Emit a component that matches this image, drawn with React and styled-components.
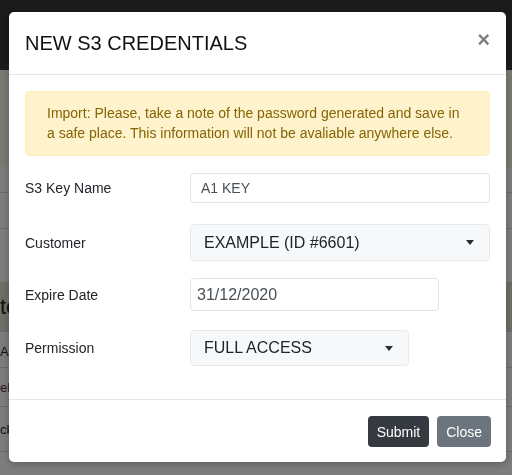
import React from "react";
import styled, { createGlobalStyle } from "styled-components";

const GlobalStyle = createGlobalStyle`
   html, body {
      margin: 0;
      padding: 0;
      height: 475px;
      overflow: hidden;
      font-family: "Liberation Sans", Arial, sans-serif;
      background: #fafafa;
   }
   * {
      box-sizing: border-box;
   }
`;

// page behind the modal
const Page = styled.div`
   display: flex;
   flex-direction: column;
   height: 475px;
   background: #fafafa;
`;

const Navbar = styled.div`
   height: 70px;
   background: #363636;
`;

const PageHead = styled.div`
   height: 97px;
   background: #f5f5e6;
`;

const TableRow = styled.div`
   display: flex;
   align-items: center;
   height: ${(p) => p.$h}px;
   border-bottom: 1px solid #d6d6d6;
   background: ${(p) => (p.$band ? "#dedece" : "#fafafa")};
   font-size: ${(p) => (p.$big ? "22px" : "13px")};
   color: ${(p) => p.$color || "#212529"};
   padding-top: ${(p) => p.$pt || 0}px;
   white-space: nowrap;
`;

// modal
const Backdrop = styled.div`
   position: fixed;
   inset: 0;
   background: rgba(0, 0, 0, 0.5);
`;

const Modal = styled.div`
   position: fixed;
   top: 12px;
   left: 9px;
   width: 497px;
   background: #fff;
   border-radius: 5px;
   box-shadow: 0 2px 8px rgba(0, 0, 0, 0.25);
   color: #212529;
`;

const Header = styled.div`
   display: flex;
   align-items: center;
   justify-content: space-between;
   height: 63px;
   padding: 0 16px;
   border-bottom: 1px solid #e5e5e5;
`;

const Title = styled.h5`
   margin: 0;
   padding-top: 1px;
   font-size: 20px;
   font-weight: 400;
   color: #111;
`;

const CloseX = styled.button`
   border: 0;
   background: none;
   padding: 0;
   margin-top: -6px;
   font-family: "Liberation Sans", Arial, sans-serif;
   font-size: 22px;
   font-weight: 700;
   line-height: 1;
   color: #000;
   opacity: 0.5;
`;

const Body = styled.div`
   padding: 16px;
`;

const Alert = styled.div`
   padding: 11px 20px 12px 21px;
   margin-bottom: 17px;
   border: 1px solid #ffeeba;
   border-radius: 4px;
   background: #fff3cd;
   color: #856404;
   font-size: 14px;
   line-height: 20px;
`;

const Row = styled.div`
   display: grid;
   grid-template-columns: 165px 1fr;
   align-items: center;
   margin-bottom: ${(p) => p.$mb || 0}px;
`;

const Label = styled.label`
   font-size: 14px;
   color: #212529;
`;

const Input = styled.div`
   display: flex;
   align-items: center;
   width: ${(p) => p.$w || "100%"};
   height: ${(p) => p.$h}px;
   padding: 0 ${(p) => p.$pl}px;
   border: 1px solid #e1e4e7;
   border-radius: 4px;
   background: #fff;
   color: #495057;
   font-size: ${(p) => p.$fs}px;
`;

const Select = styled.div`
   display: flex;
   align-items: center;
   justify-content: space-between;
   width: ${(p) => p.$w || "100%"};
   height: ${(p) => p.$h}px;
   padding: 0 15px 0 13px;
   border: 1px solid #e6e9ec;
   border-radius: 4px;
   background: #f7f8f9;
   color: #212529;
   font-size: 16px;
`;

const Caret = styled.span`
   width: 0;
   height: 0;
   border-left: 4.5px solid transparent;
   border-right: 4.5px solid transparent;
   border-top: 5px solid #2b2f33;
`;

const Footer = styled.div`
   display: flex;
   justify-content: flex-end;
   gap: 8px;
   padding: 16px 15px 15px;
   border-top: 1px solid #e5e5e5;
`;

const Button = styled.button`
   height: 31px;
   padding: 0 9px;
   border: 0;
   border-radius: 4px;
   background: ${(p) => (p.$dark ? "#343a40" : "#6c757d")};
   color: #fff;
   font-family: "Liberation Sans", Arial, sans-serif;
   font-size: 14px;
`;

export default function App() {
   return (
      <>
         <GlobalStyle />
         <Page>
            <Navbar />
            <PageHead />
            <TableRow $h={26} />
            <TableRow $h={36} />
            <TableRow $h={54} />
            <TableRow $h={49} $band $big>
               to
            </TableRow>
            <TableRow $h={36} $pt={4}>
               A
            </TableRow>
            <TableRow $h={39} $color="#5a2a5a">
               eld
            </TableRow>
            <TableRow $h={45}>ck</TableRow>
         </Page>
         <Backdrop />
         <Modal>
            <Header>
               <Title>NEW S3 CREDENTIALS</Title>
               <CloseX>×</CloseX>
            </Header>
            <Body>
               <Alert>
                  Import: Please, take a note of the password generated and save in a safe place. This
                  information will not be avaliable anywhere else.
               </Alert>
               <Row $mb={21}>
                  <Label>S3 Key Name</Label>
                  <Input $h={30} $pl={10} $fs={14}>
                     A1 KEY
                  </Input>
               </Row>
               <Row $mb={17}>
                  <Label>Customer</Label>
                  <Select $h={37}>
                     EXAMPLE (ID #6601)
                     <Caret />
                  </Select>
               </Row>
               <Row $mb={19}>
                  <Label>Expire Date</Label>
                  <Input $h={33} $w="249px" $pl={6} $fs={16}>
                     31/12/2020
                  </Input>
               </Row>
               <Row $mb={17}>
                  <Label>Permission</Label>
                  <Select $h={36} $w="219px">
                     FULL ACCESS
                     <Caret />
                  </Select>
               </Row>
            </Body>
            <Footer>
               <Button $dark>Submit</Button>
               <Button>Close</Button>
            </Footer>
         </Modal>
      </>
   );
}
